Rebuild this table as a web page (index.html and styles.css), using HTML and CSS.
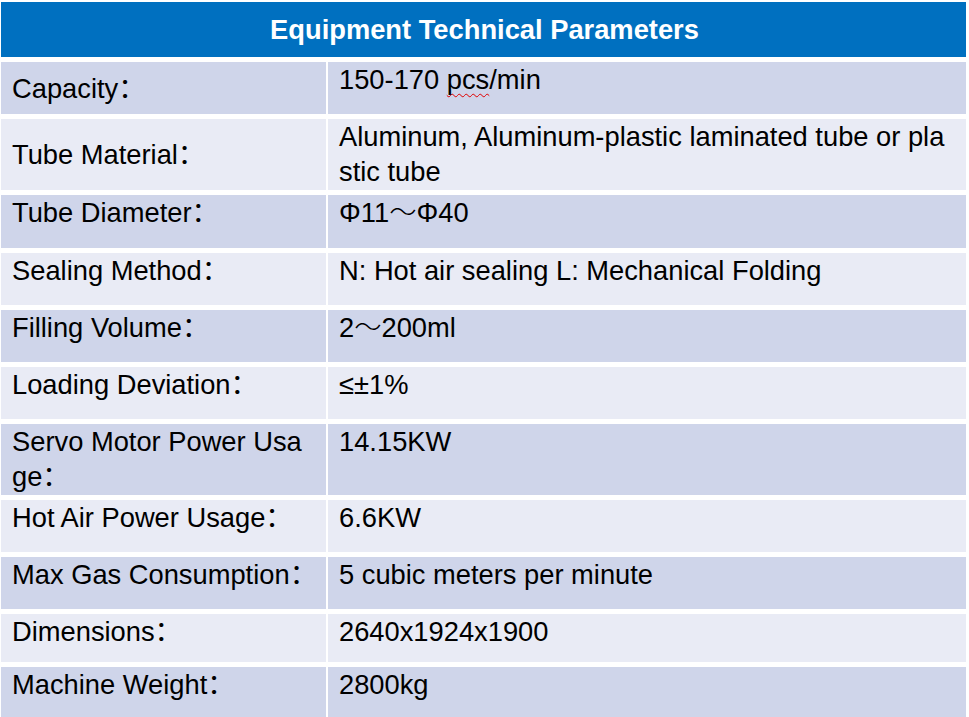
FILE: index.html
```html
<!DOCTYPE html>
<html lang="en">
<head>
<meta charset="utf-8">
<title>Equipment Technical Parameters</title>
<link rel="stylesheet" href="styles.css">
</head>
<body>
<div class="sheet">
  <div class="head">Equipment Technical Parameters</div>

  <div class="cell odd mid">Capacity：</div>
  <div class="cell odd val">150-170 <span class="spell">pcs</span>/min</div>

  <div class="cell even mid">Tube Material：</div>
  <div class="cell even val">Aluminum, Aluminum-plastic laminated tube or pla<br>stic tube</div>

  <div class="cell odd">Tube Diameter：</div>
  <div class="cell odd val">Φ11<span class="cjk">～</span>Φ40</div>

  <div class="cell even">Sealing Method：</div>
  <div class="cell even val">N: Hot air sealing L: Mechanical Folding</div>

  <div class="cell odd">Filling Volume：</div>
  <div class="cell odd val">2<span class="cjk">～</span>200ml</div>

  <div class="cell even">Loading Deviation：</div>
  <div class="cell even val">≤±1%</div>

  <div class="cell odd">Servo Motor Power Usa<br>ge：</div>
  <div class="cell odd val">14.15KW</div>

  <div class="cell even">Hot Air Power Usage：</div>
  <div class="cell even val">6.6KW</div>

  <div class="cell odd">Max Gas Consumption：</div>
  <div class="cell odd val">5 cubic meters per minute</div>

  <div class="cell even">Dimensions：</div>
  <div class="cell even val">2640x1924x1900</div>

  <div class="cell odd">Machine Weight：</div>
  <div class="cell odd val">2800kg</div>
</div>
</body>
</html>
```

FILE: styles.css
```css
html, body {
  margin: 0;
  padding: 0;
  background: #ffffff;
}

body {
  font-family: "Liberation Sans", Arial, "Noto Sans CJK SC", sans-serif;
  color: #000000;
}

.sheet {
  display: grid;
  grid-template-columns: 325px 638px;
  grid-template-rows: 55px 52px 71px 53px 52px 52px 52px 71px 52px 52px 48px 55px;
  column-gap: 2px;
  row-gap: 5px;
  padding: 2px 0 0 1px;
  width: 965px;
}

.head {
  grid-column: 1 / 3;
  background: #0070c0;
  color: #ffffff;
  font-weight: bold;
  font-size: 27.3px;
  display: flex;
  align-items: center;
  justify-content: center;
  padding-left: 2px;
}

.cell {
  font-size: 27.3px;
  line-height: 35px;
  padding: 0 0 0 11px;
  white-space: nowrap;
}

.cell.val {
  padding-left: 11px;
}

.cell.mid {
  display: flex;
  align-items: center;
}

.odd {
  background: #cfd5ea;
}

.even {
  background: #e9ebf5;
}

.cjk {
  font-family: "Noto Sans CJK SC", sans-serif;
  font-weight: 300;
  line-height: 1;
}

.spell {
  text-decoration: underline wavy #e00000;
  text-decoration-thickness: 1px;
  text-underline-offset: 4px;
  text-decoration-skip-ink: none;
}
```
